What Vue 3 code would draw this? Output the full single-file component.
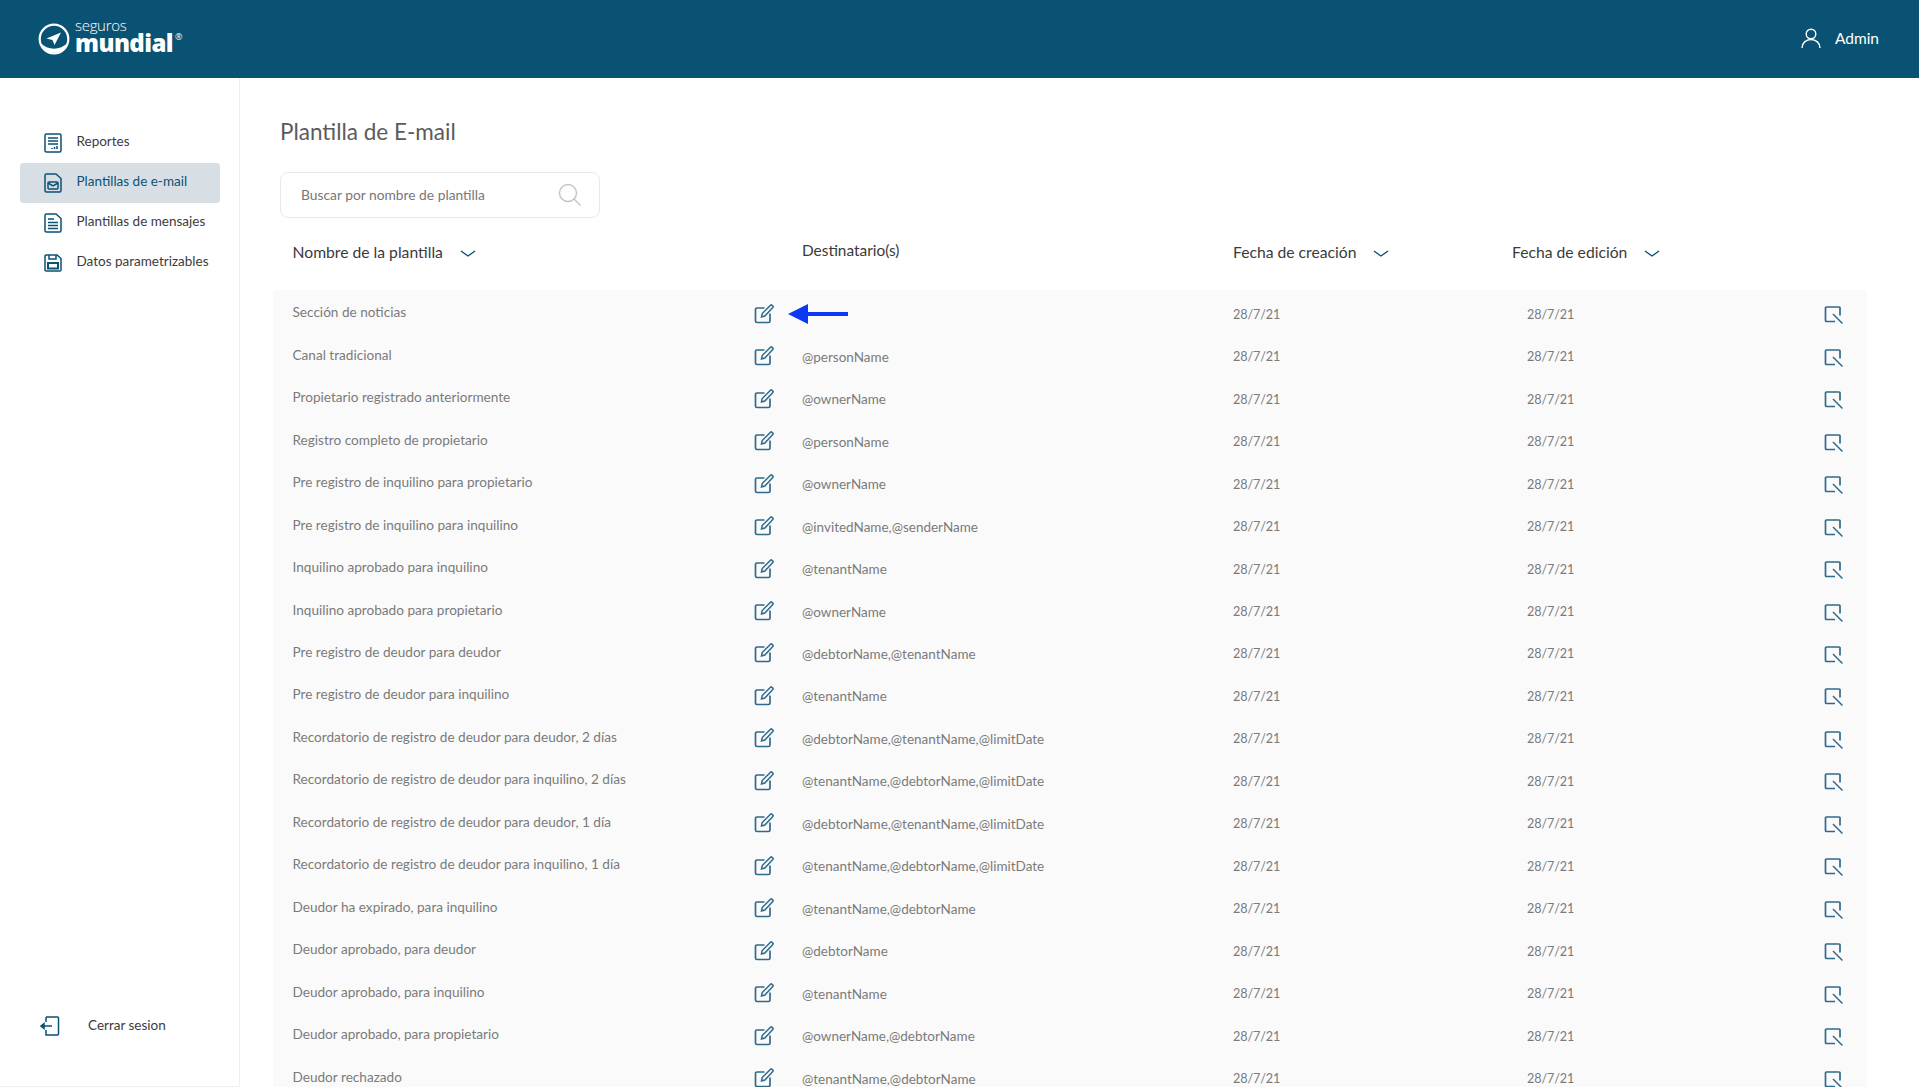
<script setup>
const rows = [
  ['Sección de noticias', ''],
  ['Canal tradicional', '@personName'],
  ['Propietario registrado anteriormente', '@ownerName'],
  ['Registro completo de propietario', '@personName'],
  ['Pre registro de inquilino para propietario', '@ownerName'],
  ['Pre registro de inquilino para inquilino', '@invitedName,@senderName'],
  ['Inquilino aprobado para inquilino', '@tenantName'],
  ['Inquilino aprobado para propietario', '@ownerName'],
  ['Pre registro de deudor para deudor', '@debtorName,@tenantName'],
  ['Pre registro de deudor para inquilino', '@tenantName'],
  ['Recordatorio de registro de deudor para deudor, 2 días', '@debtorName,@tenantName,@limitDate'],
  ['Recordatorio de registro de deudor para inquilino, 2 días', '@tenantName,@debtorName,@limitDate'],
  ['Recordatorio de registro de deudor para deudor, 1 día', '@debtorName,@tenantName,@limitDate'],
  ['Recordatorio de registro de deudor para inquilino, 1 día', '@tenantName,@debtorName,@limitDate'],
  ['Deudor ha expirado, para inquilino', '@tenantName,@debtorName'],
  ['Deudor aprobado, para deudor', '@debtorName'],
  ['Deudor aprobado, para inquilino', '@tenantName'],
  ['Deudor aprobado, para propietario', '@ownerName,@debtorName'],
  ['Deudor rechazado', '@tenantName,@debtorName']
]
</script>

<template>
  <div class="page">
    <header class="topbar">
      <div class="logo">
        <svg class="logo-mark" width="32" height="32" viewBox="0 0 32 32">
          <circle cx="16" cy="16" r="14.300" fill="none" stroke="#fff" stroke-width="2.200" />
          <path d="M2.500 20 A14.300 14.300 0 0 0 29.500 20 A19 19 0 0 1 2.500 20Z" fill="#fff" />
          <path d="M23 9.500 L16.500 22 L14.500 17 L8.500 15.500Z" fill="#fff" />
        </svg>
        <div class="logo-text">
          <span class="logo-top">seguros</span>
          <span class="logo-main">mundial<sup>®</sup></span>
        </div>
      </div>
      <div class="user">
        <svg width="20" height="20" viewBox="0 0 20 20" fill="none" stroke="#fff" stroke-width="1.400">
          <circle cx="10" cy="6" r="4.800" />
          <path d="M1 20c0-5 4-8.500 9-8.500s9 3.500 9 8.500" />
        </svg>
        <span>Admin</span>
      </div>
    </header>

    <div class="body">
      <aside class="sidebar">
        <nav class="nav">
          <a class="nav-item">
            <svg class="nav-icon" width="18" height="20" viewBox="0 0 18 20" fill="none" stroke="#0c5273" stroke-width="1.500">
              <rect x="1" y="1" width="16" height="18" rx="1.500" />
              <path d="M4 5h10M4 8h10M4 11h10" />
              <path d="M8 16v-1M10.500 16v-2M13 16v-3" />
            </svg>
            <span>Reportes</span>
          </a>
          <a class="nav-item active">
            <svg class="nav-icon" width="18" height="20" viewBox="0 0 18 20" fill="none" stroke="#0c5273" stroke-width="1.500">
              <path d="M2.500 1H12l5 4.500V17.500a1.500 1.500 0 0 1-1.500 1.500h-13A1.500 1.500 0 0 1 1 17.500v-15A1.500 1.500 0 0 1 2.500 1Z" />
              <rect x="4" y="9" width="10" height="7" rx="1" />
              <path d="M4 10l5 3 5-3" />
            </svg>
            <span>Plantillas de e-mail</span>
          </a>
          <a class="nav-item">
            <svg class="nav-icon" width="18" height="20" viewBox="0 0 18 20" fill="none" stroke="#0c5273" stroke-width="1.500">
              <path d="M2.500 1H12l5 4.500V17.500a1.500 1.500 0 0 1-1.500 1.500h-13A1.500 1.500 0 0 1 1 17.500v-15A1.500 1.500 0 0 1 2.500 1Z" />
              <path d="M4 6h6M4 9.500h10M4 12.500h10M4 15.500h10" />
            </svg>
            <span>Plantillas de mensajes</span>
          </a>
          <a class="nav-item">
            <svg class="nav-icon" width="18" height="18" viewBox="0 0 18 18" fill="none" stroke="#0c5273" stroke-width="1.500">
              <path d="M2 1h11l4 3.500V16a1 1 0 0 1-1 1H2a1 1 0 0 1-1-1V2a1 1 0 0 1 1-1Z" />
              <path d="M5 1v4h7V1" />
              <rect x="4" y="9" width="10" height="5.500" stroke-width="2" />
            </svg>
            <span>Datos parametrizables</span>
          </a>
        </nav>
        <a class="logout">
          <svg width="20" height="20" viewBox="0 0 20 20" fill="none" stroke="#0c5273" stroke-width="1.500">
            <path d="M6 1h11.500a1 1 0 0 1 1 1v16a1 1 0 0 1-1 1H6V14M6 6V1" />
            <path d="M1.500 10H12" />
            <path d="M1 10l3-2.500v5Z" fill="#0c5273" />
          </svg>
          <span>Cerrar sesion</span>
        </a>
      </aside>

      <main class="main">
        <h1 class="title">Plantilla de E-mail</h1>
        <div class="search">
          <span>Buscar por nombre de plantilla</span>
          <svg width="24" height="24" viewBox="0 0 24 24" fill="none" stroke="#c4c4c4" stroke-width="1.400">
            <circle cx="10" cy="10" r="8.500" />
            <path d="M16 16l6.500 6.500" />
          </svg>
        </div>

        <div class="thead">
          <div class="th sort first">
            Nombre de la plantilla
            <svg class="chev" width="16" height="8" viewBox="0 0 16 8" fill="none" stroke="#0c5273" stroke-width="1.400"><path d="M1 1l7 5 7-5" /></svg>
          </div>
          <div class="th dest">Destinatario(s)</div>
          <div class="th sort">
            Fecha de creación
            <svg class="chev" width="16" height="8" viewBox="0 0 16 8" fill="none" stroke="#0c5273" stroke-width="1.400"><path d="M1 1l7 5 7-5" /></svg>
          </div>
          <div class="th sort">
            Fecha de edición
            <svg class="chev" width="16" height="8" viewBox="0 0 16 8" fill="none" stroke="#0c5273" stroke-width="1.400"><path d="M1 1l7 5 7-5" /></svg>
          </div>
        </div>

        <div class="table">
          <div v-for="(row, i) in rows" :key="i" class="row">
            <div class="name">{{ row[0] }}</div>
            <div class="edit">
              <svg width="20" height="20" viewBox="0 0 20 20" fill="none" stroke="#2f6a8c" stroke-width="1.700">
                <path d="M10.500 4H3a1.500 1.500 0 0 0-1.500 1.500V17A1.500 1.500 0 0 0 3 18.500h11.500A1.500 1.500 0 0 0 16 17V9.500" />
                <path d="M7.500 13l.7-3.500L16.500 1.200a1 1 0 0 1 1.400 0l.9.900a1 1 0 0 1 0 1.400L10.800 12Z" stroke-width="1.500" />
              </svg>
              <svg v-if="i === 0" class="arrow" width="60" height="20" viewBox="0 0 60 20">
                <path d="M0 10L20 0V8H60V12H20V20Z" fill="#0a38f5" />
              </svg>
            </div>
            <div class="cell recip">{{ row[1] }}</div>
            <div class="cell date">28/7/21</div>
            <div class="cell date">28/7/21</div>
            <div class="view">
              <svg width="20" height="20" viewBox="0 0 20 20" fill="none" stroke="#2f6a8c">
                <path d="M16 10.500V3a1 1 0 0 0-1-1H2.500a1 1 0 0 0-1 1v12.500a1 1 0 0 0 1 1H11" stroke-width="1.700" />
                <path d="M9 9l9.500 9.500" stroke-width="1.500" />
              </svg>
            </div>
          </div>
        </div>
      </main>
    </div>
  </div>
</template>

<style>
html, body { margin: 0; padding: 0; background: #fff; overflow: hidden; }
</style>

<style scoped>
.page {
  width: 1919px;
  height: 1087px;
  overflow: hidden;
  display: flex;
  flex-direction: column;
  font-family: "Lato", "Open Sans", sans-serif;
  color: #3a3a3a;
}
.topbar {
  flex: 0 0 78px;
  background: #0a5273;
  display: flex;
  align-items: center;
  justify-content: space-between;
  padding: 0 40px 0 38px;
  color: #fff;
}
.logo { display: flex; align-items: center; gap: 5px; }
.logo-text { display: flex; flex-direction: column; padding-bottom: 5px; }
.logo-top { display: block; font-family: "Open Sans", sans-serif; font-size: 15px; font-weight: 300; line-height: 13px; letter-spacing: -0.3px; }
.logo-main { display: block; font-family: "Open Sans", sans-serif; font-size: 24px; font-weight: 800; line-height: 22px; letter-spacing: -0.6px; position: relative; }
.logo-main sup { font-size: 9px; font-weight: 400; position: absolute; top: 0; margin-left: 2px; line-height: 1; }
.user { display: flex; align-items: center; gap: 14px; font-size: 15.500px; padding-bottom: 2px; }
.body { flex: 1; display: flex; min-height: 0; }
.sidebar {
  width: 239px;
  border-right: 1px solid #efefef;
  border-bottom: 1px solid #efefef;
  height: 1008px;
  display: flex;
  flex-direction: column;
  justify-content: space-between;
}
.nav { padding: 45px 19px 0 20px; display: flex; flex-direction: column; }
.nav-item {
  height: 40px;
  display: flex;
  align-items: center;
  border-radius: 4px;
  padding-left: 24px;
  gap: 14.500px;
  font-size: 13.500px;
  color: #3c3c3c;
}
.nav-item span { margin-bottom: 4px; }
.nav-icon { flex: none; }
.active { background: #d7dfe5; color: #0c5273; }
.logout {
  display: flex;
  align-items: center;
  gap: 28px;
  padding: 0 0 50px 40px;
  font-size: 13.500px;
  color: #3c3c3c;
}
.logout span { margin-bottom: 2px; }
.main { flex: 1; padding: 0 52px 0 33px; min-width: 0; }
.title {
  margin: 38px 0 0 7px;
  font-size: 22.500px;
  line-height: 32px;
  font-weight: 400;
  color: #5b5b5b;
}
.search {
  width: 320px;
  height: 46px;
  box-sizing: border-box;
  margin: 24px 0 0 7px;
  border: 1px solid #e9e9e9;
  border-radius: 8px;
  display: flex;
  align-items: center;
  justify-content: space-between;
  padding: 0 17px 0 20px;
  font-size: 13.800px;
  color: #777;
}
.search span { margin-bottom: 2px; }
.thead {
  height: 72px;
  display: grid;
  grid-template-columns: 510px 431px 279px 1fr;
  padding-left: 19px;
  align-items: center;
  font-size: 15.700px;
  color: #3a3a3a;
}
.th { padding-bottom: 5px; }
.first { padding-left: 0.500px; }
.dest { padding-bottom: 9px; font-size: 15.400px; }
.sort { display: flex; align-items: center; }
.chev { margin-left: 17px; margin-top: 5px; }
.table { background: #fafafa; padding-top: 3px; }
.row {
  height: 42.470px;
  display: grid;
  grid-template-columns: 463px 47px 431px 294px 298px 1fr;
  padding-left: 19px;
  align-items: center;
  font-size: 13.600px;
  color: #7a7a7a;
}
.name { padding: 0 0 4px 0.500px; }
.recip { font-size: 13.500px; }
.date { font-size: 12.600px; letter-spacing: -0.1px; }
.edit { position: relative; display: flex; align-items: center; padding-bottom: 1px; margin-left: -1px; }
.edit svg { display: block; }
.arrow { position: absolute; left: 34px; top: 0; }
.view { display: flex; padding-top: 2px; margin-left: -1px; }
.view svg { display: block; }
</style>
